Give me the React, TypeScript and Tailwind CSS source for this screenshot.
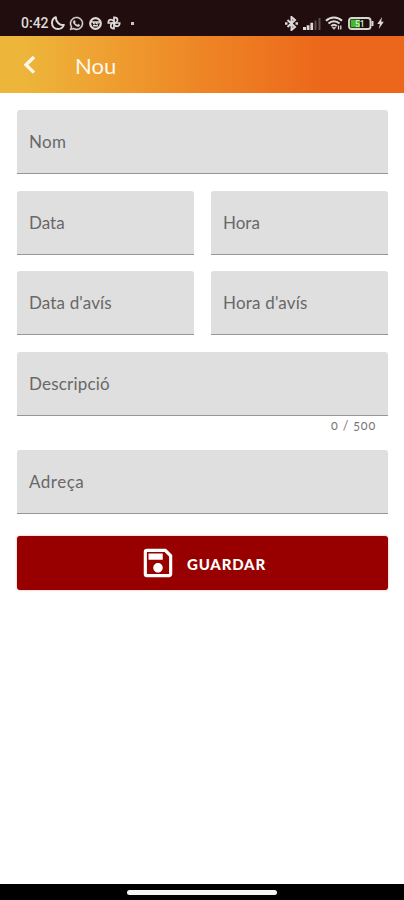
import { useState } from "react";
import { FaWhatsapp } from "react-icons/fa";
import { MdOutlineSave } from "react-icons/md";

const Field = ({
  label,
  className,
  labelClass,
}: {
  label: string;
  className?: string;
  labelClass: string;
}) => {
  const [value, setValue] = useState<string>("");
  return (
    <label
      className={`relative flex items-center h-16 px-3 rounded-t-[3px] bg-[#dfdfdf] border-b border-[#969696] ${className ?? ""}`}
    >
      {value === "" && (
        <span
          className={`text-[17px] leading-6 text-[#686868] whitespace-nowrap ${labelClass}`}
        >
          {label}
        </span>
      )}
      <input
        className="absolute inset-0 px-3 bg-transparent outline-none text-[#333]"
        value={value}
        aria-label={label}
        onChange={(e) => setValue(e.target.value)}
      />
    </label>
  );
};

const StatusBar = () => (
  <div className="h-9 shrink-0 bg-[#210d0e] flex items-start justify-between pt-[15px] pl-[21px] pr-[20px] text-[#dedada]">
    <div className="flex items-center h-4">
      <span className="font-['Roboto',sans-serif] font-medium text-[14px] leading-4 w-[29px]">
        0:42
      </span>
      <svg className="ml-[1px] size-[14px]" viewBox="0 0 14 14" fill="none">
        <path
          d="M4.800 1.200C2.400 2.200 1 4.200 1 7c0 3.500 2.500 6 6 6 2.700 0 4.900-1.500 5.800-4C9 9.700 4.800 6.500 4.800 1.200z"
          stroke="currentColor"
          strokeWidth="2"
          strokeLinejoin="round"
        />
      </svg>
      <FaWhatsapp className="ml-[4px] size-[15px]" stroke="currentColor" strokeWidth="14" />
      <svg className="ml-[5px] size-[13px]" viewBox="0 0 13 13" fill="none">
        <circle cx="6.500" cy="6.500" r="5.300" stroke="currentColor" strokeWidth="2.200" />
        <path d="M2 5h9M4 8.700h5" stroke="currentColor" strokeWidth="1.500" />
        <path d="M4.500 5v2h1.500V5M7.500 5v2H9V5" stroke="currentColor" />
      </svg>
      <svg
        className="ml-[5px] size-[14px]"
        viewBox="0 0 14 14"
        fill="none"
        stroke="currentColor"
        strokeWidth="1.700"
      >
        <path d="M7 7V1.300c2.500 0 3.500 1.200 3.500 2.600S9.300 7 7 7z" />
        <path d="M7 7h5.700c0 2.300-1.200 3.300-2.600 3.300S7 9.300 7 7z" />
        <path d="M7 7v5.700c-2.300 0-3.300-1.200-3.300-2.600S4.700 7 7 7z" />
        <path d="M7 7H1.300c0-2.300 1.200-3.300 2.600-3.300S7 4.700 7 7z" />
      </svg>
      <span className="ml-[10px] size-[3px] bg-[#c9c3c3]" />
    </div>
    <div className="flex items-center h-4">
      <svg
        className="size-[15px]"
        viewBox="0 0 15 15"
        fill="none"
        stroke="currentColor"
        strokeWidth="2"
      >
        <path d="M3.500 4l7.500 7-3.500 3V1L11 4l-7.500 7" />
        <path d="M1 7.500h2.500M11.500 7.500H14" strokeWidth="2.400" />
      </svg>
      <svg className="ml-[4px] mt-[1px] w-[18px] h-[12px]" viewBox="0 0 18 12" fill="currentColor">
        <path d="M0 9h3v3H0zM3.700 7.200h2.800V12H3.700zM7.400 4.800h2.700V12H7.400z" />
        <path d="M11.500 2.400h2V12h-2zM15.500 0h2v12h-2z" opacity=".32" />
      </svg>
      <svg
        className="ml-[4px] w-[18px] h-[14px]"
        viewBox="0 0 18 14"
        fill="none"
        stroke="currentColor"
        strokeWidth="2.100"
      >
        <path d="M1 4.800c4.500-4.400 11.500-4.400 16 0M3.500 7.500c3.200-3 7.800-3 11 0M6.200 10c1.700-1.500 3.900-1.500 5.600 0" />
        <path d="M7 11.200l2 2.300 2-2.300z" fill="currentColor" strokeWidth="0.500" />
        <path d="M13.500 9.500v4M15.800 9.500v4" strokeWidth="1.300" />
      </svg>
      <svg className="ml-[5px] w-[26px] h-[13px]" viewBox="0 0 26 13" fill="none">
        <rect x="1" y="1" width="21.500" height="11" rx="2.600" stroke="#d6d6d2" strokeWidth="1.900" />
        <path d="M24.500 4v5" stroke="#d6d6d2" strokeWidth="2" />
        <rect x="2.600" y="2.600" width="9.400" height="7.800" fill="#45b72c" />
        <text
          x="11.800"
          y="9.500"
          textAnchor="middle"
          fontFamily="Roboto, sans-serif"
          fontSize="8.500"
          fontWeight="500"
          fill="#d7eed2"
        >
          51
        </text>
      </svg>
      <svg className="ml-[3px] w-[7px] h-[12px]" viewBox="0 0 7 12" fill="currentColor">
        <path d="M5 0L0.300 7h2.600L1.800 12 6.800 4.800H4.200z" />
      </svg>
    </div>
  </div>
);

export default function App() {
  return (
    <div className="w-full h-screen flex flex-col bg-white overflow-hidden font-['Lato',sans-serif]">
      <StatusBar />
      <header className="h-[57px] shrink-0 flex items-center pl-[14px] bg-linear-to-r from-[#edb63a] from-5% via-[#ee8525] via-50% to-[#ec671b] to-80% text-white">
        <button aria-label="Enrere" className="size-8">
          <svg viewBox="0 0 32 32" fill="none" stroke="#fff8e8" strokeWidth="3.400">
            <path d="M20 8L12 15.800l8 7.800" />
          </svg>
        </button>
        <h1 className="mt-[3px] ml-[29px] text-[22px] leading-7 text-[#fff8ed]">
          Nou
        </h1>
      </header>
      <main className="flex-1 flex flex-col px-[17px] pr-4 pt-[17px]">
        <Field label="Nom" labelClass="tracking-[0.300px]" />
        <div className="mt-[17px] grid grid-cols-2 gap-x-[17px] gap-y-4">
          <Field label="Data" labelClass="" />
          <Field label="Hora" labelClass="" />
          <Field label="Data d'avís" labelClass="tracking-[0.150px]" />
          <Field label="Hora d'avís" labelClass="tracking-[0.200px]" />
        </div>
        <Field className="mt-[17px]" label="Descripció" labelClass="tracking-[0.200px]" />
        <span className="h-[17px] mt-px mr-[12px] self-end text-[12.500px] leading-[17px] tracking-[0.850px] oldstyle-nums text-[#777]">
          0 / 500
        </span>
        <Field className="mt-4" label="Adreça" labelClass="tracking-[0.500px]" />
        <button className="mt-[22px] h-[54px] rounded-[3px] bg-[#980000] text-white flex items-center justify-center shadow-[0_0_2px_#98000066]">
          <MdOutlineSave className="size-[38px]" />
          <span className="mt-[2px] ml-[10px] text-[15px] font-black tracking-[0.800px]">
            GUARDAR
          </span>
        </button>
      </main>
      <div className="h-4 shrink-0 bg-black flex justify-center pt-[6px]">
        <div className="w-[150px] h-[5px] rounded-full bg-[#f5f5f5]" />
      </div>
    </div>
  );
}
